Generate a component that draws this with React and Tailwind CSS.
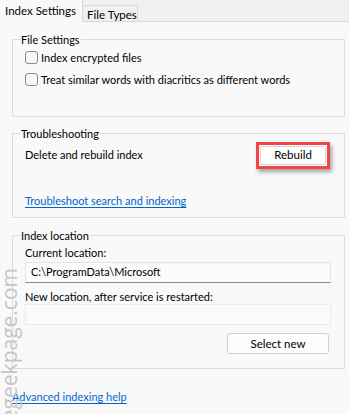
import React from "react";

const Checkbox = ({ label }) => (
    <label className="flex items-center gap-[3px] h-[13px]">
        <span className="w-[13px] h-[13px] rounded-[3px] border border-[#8b8b8b] bg-[#f7f7f7] shrink-0" />
        <span className="leading-none whitespace-nowrap">{label}</span>
    </label>
);

const Group = ({ title, className = "", children }) => (
    <fieldset className={`border border-[#dcdcdc] ml-3 mr-[4px] px-3 ${className}`}>
        <legend className="px-[1px] -ml-[5px] leading-none">{title}</legend>
        {children}
    </fieldset>
);

export default function App() {
    return (
        <div
            className="relative w-[349px] h-[414px] overflow-hidden bg-[#f0f0f0] text-[11px] text-black whitespace-nowrap"
            style={{ fontFamily: '"Segoe UI", Lato, sans-serif' }}
        >
            {/* Tabs */}
            <div className="flex items-end h-[22px]">
                <div className="h-[22px] w-[83px] bg-[#f9f9f9] border-r border-[#d9d9d9] flex items-center pl-[5px] pb-[1px] relative z-10 text-[11.5px]">
                    Index Settings
                </div>
                <div className="h-[17px] w-[55px] border-t border-r border-[#d9d9d9] flex items-center pl-[4px] pt-[1px] text-[11.5px]">
                    File Types
                </div>
            </div>

            {/* Panel */}
            <div className="bg-[#f9f9f9] border-t border-[#d9d9d9] -mt-[1px] h-[393px] pt-[12px] flex flex-col">
                <Group title="File Settings" className="h-[83px] pt-[6px] flex flex-col gap-[9px]">
                    <Checkbox label="Index encrypted files" />
                    <Checkbox label="Treat similar words with diacritics as different words" />
                </Group>

                <Group title="Troubleshooting" className="mt-[11px] h-[90px]">
                    <div className="flex items-center justify-between h-[28px] mt-[2px] pr-[2px]">
                        <span>Delete and rebuild index</span>
                        <div className="border-[3px] border-[#ef4747] p-[1px] shadow-[2px_3px_4px_rgba(0,0,0,0.35)]">
                            <button className="w-[66px] h-[19px] bg-white border border-[#d6d6d6] rounded-[2px] leading-none text-[11.5px]">
                                Rebuild
                            </button>
                        </div>
                    </div>
                    <a className="block mt-[26px] text-[#0066cc] underline underline-offset-[2px] leading-none w-fit">
                        Troubleshoot search and indexing
                    </a>
                </Group>

                <Group title="Index location" className="mt-[12px] h-[139px] pt-[6px] flex flex-col">
                    <span className="leading-none">Current location:</span>
                    <div className="mt-[4px] mr-[1px] h-[21px] bg-[#fbfbfb] border border-[#e3e3e3] border-b-[#8b8b8b] flex items-center pl-[5px]">
                        C:\ProgramData\Microsoft
                    </div>
                    <span className="mt-[8px] leading-none">New location, after service is restarted:</span>
                    <div className="mt-[2px] mr-[1px] h-[21px] bg-[#fbfbfb] border border-[#ebebeb]" />
                    <div className="flex justify-end mt-[8px] pr-[3px]">
                        <button className="w-[102px] h-[21px] bg-[#fdfdfd] border border-[#d0d0d0] rounded-[3px] leading-none text-[11.5px]">
                            Select new
                        </button>
                    </div>
                </Group>

                <a className="ml-3 mt-[22px] text-[#0066cc] underline underline-offset-[2px] leading-none w-fit">
                    Advanced indexing help
                </a>
            </div>

            {/* Watermark */}
            <div
                className="absolute left-[-1px] top-[268px] text-[21px] text-[#c6c6c6] leading-none [writing-mode:vertical-rl] rotate-180 pointer-events-none"
                style={{ fontFamily: '"Open Sans", sans-serif' }}
            >
                thegeekpage.com
            </div>
        </div>
    );
}
